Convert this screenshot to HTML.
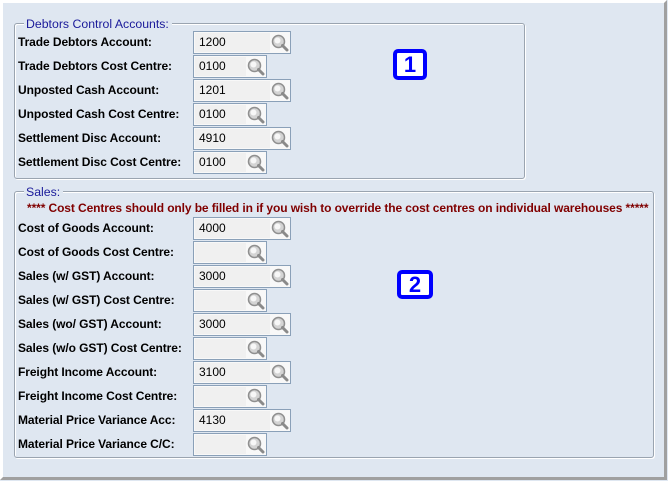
<!DOCTYPE html>
<html><head><meta charset="utf-8"><style>
*{margin:0;padding:0;box-sizing:border-box}
body{width:668px;height:481px;background:#dfe7f1;position:relative;overflow:hidden;font-family:"Liberation Sans",Arial,sans-serif}
.frame{position:absolute;left:0;top:0;width:667px;height:480px;border-top:3px solid #fff;border-left:3px solid #fff;border-right:3px solid #a0a0a0;border-bottom:3px solid #a0a0a0}
.fs{position:absolute;border:1px solid #9aa4b0;box-shadow:1px 1px 0 #fff, inset 1px 1px 0 #fff;border-radius:3px}
.legend{position:absolute;background:#dfe7f1;color:#1a1a9a;font-size:12.3px;padding:0 3px 0 2px;line-height:14px}
.lbl{position:absolute;left:18px;font-size:12px;font-weight:bold;color:#000;line-height:14px;letter-spacing:-0.08px}
.in{position:absolute;left:193px;height:23px;border:1px solid #8aa0b8;background:#f8f8f8}
.in span{position:absolute;left:1px;top:1px;bottom:1px;right:20px;background:#f0f0f0;font-size:12px;line-height:19px;padding-left:4px;color:#000}
.in svg{position:absolute;right:1px;top:2px}
.badge{position:absolute;border:4px solid #0000ff;border-radius:5px;background:#fff;color:#0000ff;font-weight:bold;font-size:22px;text-align:center}
.warn{position:absolute;left:27px;top:201px;font-size:12px;font-weight:bold;color:#800000;white-space:nowrap;line-height:14px;letter-spacing:-0.1px}
</style></head><body>
<div class="frame"></div>
<div class="fs" style="left:14px;top:23px;width:511px;height:156px"></div>
<div class="legend" style="left:24px;top:17px">Debtors Control Accounts:</div>
<div class="fs" style="left:14px;top:191px;width:640px;height:267px"></div>
<div class="legend" style="left:24px;top:185px">Sales:</div>
<div class="warn">**** Cost Centres should only be filled in if you wish to override the cost centres on individual warehouses *****</div>
<div class="badge" style="left:393px;top:49px;width:34px;height:31px;line-height:23px">1</div>
<div class="badge" style="left:397px;top:270px;width:36px;height:29px;line-height:21px">2</div>
<div id="rows"></div>
<script>
var mag='<svg width="18" height="18" viewBox="0 0 18 18"><circle cx="7.5" cy="7.5" r="6" fill="#d4d4d4" stroke="#8f8f8f" stroke-width="1.5"/><circle cx="6.5" cy="6.5" r="3" fill="#fff" opacity=".8"/><path d="M11.5 11.5L16 16" stroke="#8a8a8a" stroke-width="3" stroke-linecap="round"/></svg>';
var rows=[
["Trade Debtors Account:","1200",1,42],["Trade Debtors Cost Centre:","0100",0,66],["Unposted Cash Account:","1201",1,90],["Unposted Cash Cost Centre:","0100",0,114],["Settlement Disc Account:","4910",1,138],["Settlement Disc Cost Centre:","0100",0,162],
["Cost of Goods Account:","4000",1,228],["Cost of Goods Cost Centre:","",0,252],["Sales (w/ GST) Account:","3000",1,276],["Sales (w/ GST) Cost Centre:","",0,300],["Sales (wo/ GST) Account:","3000",1,324],["Sales (w/o GST) Cost Centre:","",0,348],["Freight Income Account:","3100",1,372],["Freight Income Cost Centre:","",0,396],["Material Price Variance Acc:","4130",1,420],["Material Price Variance C/C:","",0,444]];
var h='';
rows.forEach(function(r){h+='<div class="lbl" style="top:'+(r[3]-7)+'px">'+r[0]+'</div><div class="in" style="top:'+(r[3]-11)+'px;width:'+(r[2]?98:74)+'px"><span>'+r[1]+'</span>'+mag+'</div>';});
document.getElementById('rows').innerHTML=h;
</script>
</body></html>
